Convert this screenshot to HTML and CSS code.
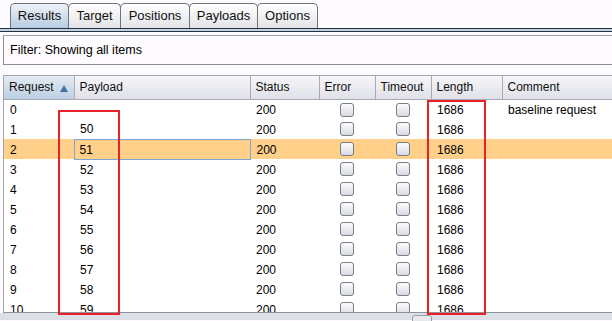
FILE: index.html
```html
<!DOCTYPE html>
<html lang="en">
<head>
    <meta charset="UTF-8">
    <title>Intruder Results</title>
    <link rel="stylesheet" href="styles.css">
</head>
<body>
    <div class="tabs">
        <div class="tab active" style="width:59px">Results</div>
        <div class="tab" style="width:53px">Target</div>
        <div class="tab" style="width:70px">Positions</div>
        <div class="tab" style="width:69px">Payloads</div>
        <div class="tab" style="width:61px">Options</div>
    </div>
    <div class="tab-line"></div>

    <div class="filter">Filter: Showing all items</div>

    <div class="results">
        <div class="table-wrap">
            <table>
                <colgroup>
                    <col style="width:70px">
                    <col style="width:176px">
                    <col style="width:69px">
                    <col style="width:56px">
                    <col style="width:56px">
                    <col style="width:71px">
                    <col style="width:130px">
                </colgroup>
                <thead>
                    <tr>
                        <th class="sorted">Request <span class="arrow"></span></th>
                        <th>Payload</th>
                        <th>Status</th>
                        <th>Error</th>
                        <th>Timeout</th>
                        <th>Length</th>
                        <th>Comment</th>
                    </tr>
                </thead>
                <tbody id="rows"></tbody>
            </table>
        </div>
        <div class="mark mark-payload"></div>
        <div class="mark mark-length"></div>
    </div>

    <div class="hscroll"><div class="thumb"></div></div>

    <script>
        const rows = document.getElementById("rows");
        for (let i = 0; i <= 10; i++) {
            const tr = document.createElement("tr");
            if (i === 2) tr.className = "selected";
            const payload = i === 0 ? "" : String(49 + i);
            const comment = i === 0 ? "baseline request" : "";
            tr.innerHTML =
                `<td>${i}</td>` +
                `<td class="${i === 2 ? "focus" : ""}">${payload}</td>` +
                `<td>200</td>` +
                `<td class="check"><span class="box"></span></td>` +
                `<td class="check"><span class="box"></span></td>` +
                `<td>1686</td>` +
                `<td>${comment}</td>`;
            rows.appendChild(tr);
        }
    </script>
</body>
</html>
```

FILE: styles.css
```css
body {
    margin: 0;
    background-color: #fdfbfd;
    color: #000;
    font-family: "Liberation Sans", Arial, sans-serif;
    font-size: 12px;
    overflow: hidden;
    height: 321px;
}

.tabs {
    display: flex;
    padding: 3px 0 0 10px;
    height: 25px;
}

.tab {
    box-sizing: border-box;
    height: 25px;
    line-height: 24px;
    font-size: 13px;
    text-align: center;
    border: 1px solid #6f737c;
    border-bottom: none;
    border-radius: 5px 5px 0 0;
    margin-right: -1px;
    background: linear-gradient(#fefefe, #e3e4e8);
    color: #111;
}

.tab.active {
    background: linear-gradient(#eef2f7, #b7cce1);
}

.tab-line {
    height: 2px;
    background-color: #bcd2e8;
    border-top: 1px solid #2a3038;
    border-bottom: 1px solid #2a3038;
}

.filter {
    box-sizing: border-box;
    margin: 3px 0 0 3px;
    width: 640px;
    height: 30px;
    line-height: 28px;
    padding-left: 6px;
    font-size: 12.5px;
    border: 1px solid #8b8b90;
    border-top-color: #a0a0a6;
    background-color: #fdfbfd;
}

.results {
    position: relative;
    margin: 10px 0 0 3px;
}

.table-wrap {
    box-sizing: border-box;
    height: 238px;
    overflow: hidden;
    border-top: 1px solid #a3a5b0;
    border-left: 1px solid #a3a5b0;
    border-bottom: 1px solid #8f919d;
    background-color: #fff;
}

table {
    border-collapse: collapse;
    table-layout: fixed;
    width: 628px;
}

th {
    box-sizing: border-box;
    height: 23px;
    padding: 0 0 0 5px;
    text-align: left;
    font-weight: normal;
    color: #111;
    background: linear-gradient(#f6f6f9, #dfe1e8);
    border-right: 1px solid #a9acb6;
    border-bottom: 1px solid #a9acb6;
    white-space: nowrap;
}

th.sorted {
    background: linear-gradient(#e4ebf3, #bccfe2);
}

.arrow {
    display: inline-block;
    width: 0;
    height: 0;
    margin-left: 3px;
    border-left: 4px solid transparent;
    border-right: 4px solid transparent;
    border-bottom: 7px solid #3f72a8;
    vertical-align: -1px;
}

td {
    box-sizing: border-box;
    height: 20px;
    padding: 1px 0 0 6px;
    white-space: nowrap;
    overflow: hidden;
}

tr.selected td {
    background-color: #ffd08a;
}

td.focus {
    border: 1px solid #7ba6d8;
    padding-left: 5px;
}

td.check {
    padding: 0;
    text-align: center;
}

.box {
    display: inline-block;
    box-sizing: border-box;
    width: 14px;
    height: 14px;
    border: 1px solid #787d88;
    border-radius: 3px;
    background: linear-gradient(#fbfbfc, #d9dbe1);
    vertical-align: middle;
}

.mark {
    position: absolute;
    box-sizing: border-box;
    border: 2px solid #e8222b;
    z-index: 2;
}

.mark-payload {
    left: 55px;
    top: 35px;
    width: 62px;
    height: 205px;
}

.mark-length {
    left: 424px;
    top: 25px;
    width: 59px;
    height: 215px;
}

.hscroll {
    position: relative;
    height: 7px;
    background-color: #dcdfe5;
}

.thumb {
    position: absolute;
    left: 412px;
    top: 2px;
    width: 18px;
    height: 8px;
    border: 1px solid #9a9ea8;
    border-radius: 3px;
    background-color: #e6e8ec;
}
```
